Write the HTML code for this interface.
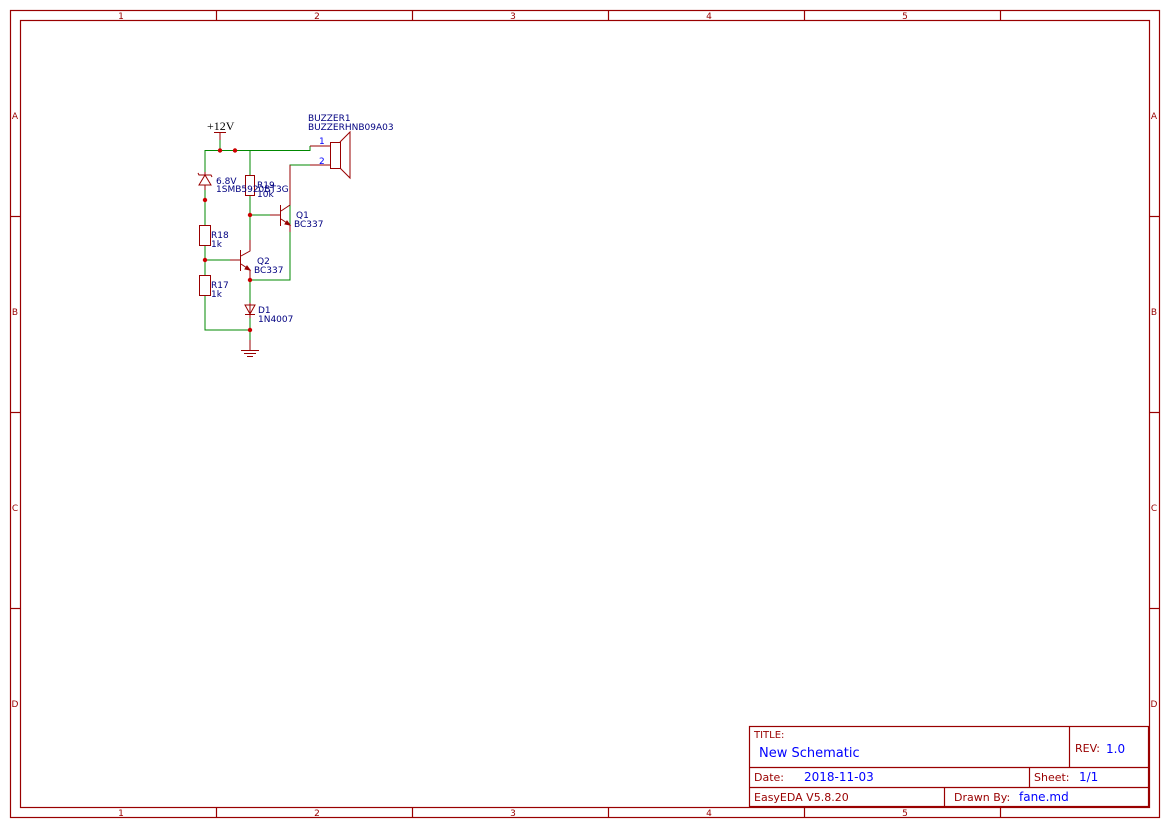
<!DOCTYPE html>
<html><head><meta charset="utf-8"><style>
html,body{margin:0;padding:0;background:#fff;}
svg{display:block;}
.fr{fill:none;stroke:#990000;stroke-width:1.2;}
.t{font-family:"DejaVu Sans","Liberation Sans",sans-serif;font-size:9px;fill:#990000;}
.b{font-family:"DejaVu Sans","Liberation Sans",sans-serif;font-size:9px;fill:#000080;}
.w{stroke:#008800;stroke-width:1;fill:none;}
.p{stroke:#990000;stroke-width:1;fill:none;}
.d{fill:#cc0000;}
</style></head><body>
<svg width="1169" height="827" viewBox="0 0 1169 827">
<rect x="10.5" y="10.5" width="1149" height="807" class="fr"/>
<rect x="20.5" y="20.5" width="1129" height="787" class="fr"/>
<g class="fr">
<line x1="216.5" y1="10" x2="216.5" y2="20"/><line x1="412.5" y1="10" x2="412.5" y2="20"/><line x1="608.5" y1="10" x2="608.5" y2="20"/><line x1="804.5" y1="10" x2="804.5" y2="20"/><line x1="1000.5" y1="10" x2="1000.5" y2="20"/>
<line x1="216.5" y1="807" x2="216.5" y2="817"/><line x1="412.5" y1="807" x2="412.5" y2="817"/><line x1="608.5" y1="807" x2="608.5" y2="817"/><line x1="804.5" y1="807" x2="804.5" y2="817"/><line x1="1000.5" y1="807" x2="1000.5" y2="817"/>
<line x1="10" y1="216.5" x2="20" y2="216.5"/><line x1="10" y1="412.5" x2="20" y2="412.5"/><line x1="10" y1="608.5" x2="20" y2="608.5"/>
<line x1="1149" y1="216.5" x2="1159" y2="216.5"/><line x1="1149" y1="412.5" x2="1159" y2="412.5"/><line x1="1149" y1="608.5" x2="1159" y2="608.5"/>
</g>
<g class="t" text-anchor="middle">
<text x="121" y="19">1</text><text x="317" y="19">2</text><text x="513" y="19">3</text><text x="709" y="19">4</text><text x="905" y="19">5</text>
<text x="121" y="816">1</text><text x="317" y="816">2</text><text x="513" y="816">3</text><text x="709" y="816">4</text><text x="905" y="816">5</text>
<text x="15" y="119">A</text><text x="15" y="315">B</text><text x="15" y="511">C</text><text x="15" y="707">D</text>
<text x="1154" y="119">A</text><text x="1154" y="315">B</text><text x="1154" y="511">C</text><text x="1154" y="707">D</text>
</g>
<!-- title block -->
<g class="fr">
<rect x="749.5" y="726.5" width="399" height="80"/>
<line x1="749" y1="767.5" x2="1149" y2="767.5"/><line x1="749" y1="787.5" x2="1149" y2="787.5"/>
<line x1="1069.5" y1="726" x2="1069.5" y2="767"/><line x1="1029.5" y1="767" x2="1029.5" y2="787"/><line x1="944.5" y1="787" x2="944.5" y2="807"/>
</g>
<text class="t" x="754" y="738" style="font-size:10px">TITLE:</text>
<text x="759" y="757" style="font-family:'DejaVu Sans',sans-serif;font-size:13px;fill:#0000ff">New Schematic</text>
<text class="t" x="1075" y="752" style="font-size:11px">REV:</text>
<text x="1106" y="753" style="font-family:'DejaVu Sans',sans-serif;font-size:12px;fill:#0000ff">1.0</text>
<text class="t" x="754" y="781" style="font-size:11px">Date:</text>
<text x="804" y="781" style="font-family:'DejaVu Sans',sans-serif;font-size:12px;fill:#0000ff">2018-11-03</text>
<text class="t" x="1034" y="781" style="font-size:11px">Sheet:</text>
<text x="1079" y="781" style="font-family:'DejaVu Sans',sans-serif;font-size:12px;fill:#0000ff">1/1</text>
<text class="t" x="754" y="801" style="font-size:11px">EasyEDA V5.8.20</text>
<text class="t" x="954" y="801" style="font-size:11px">Drawn By:</text>
<text x="1019" y="801" style="font-family:'DejaVu Sans',sans-serif;font-size:12px;fill:#0000ff">fane.md</text>
<!-- schematic wires -->
<g class="w">
<polyline points="205,150.5 310,150.5 310,146"/>
<line x1="220" y1="140" x2="220" y2="150"/>
<polyline points="310,165 290,165 290,280 250,280"/>
<line x1="205" y1="150" x2="205" y2="172"/>
<line x1="205" y1="190" x2="205" y2="225"/>
<line x1="205" y1="245" x2="205" y2="275"/>
<polyline points="205,295 205,330 250,330"/>
<line x1="250" y1="150" x2="250" y2="175"/>
<line x1="250" y1="195" x2="250" y2="240"/>
<line x1="205" y1="260" x2="230" y2="260"/>
<line x1="250" y1="215" x2="270" y2="215"/>
<line x1="250" y1="280" x2="250" y2="303"/>
<line x1="250" y1="318" x2="250" y2="340"/>
</g>
<g class="p">
<line x1="220" y1="132" x2="220" y2="140"/><line x1="214" y1="132.5" x2="226" y2="132.5"/>
<line x1="310" y1="146" x2="330" y2="146"/><line x1="310" y1="165" x2="330" y2="165"/>
<rect x="330.5" y="142.5" width="10" height="26"/>
<polyline points="340,142 350,132 350,178 340,168"/>
<!-- zener -->
<polygon points="199,185 211,185 205,175"/><polyline points="198,173 199,175 211,175 212,177"/>
<line x1="205" y1="172" x2="205" y2="175"/><line x1="205" y1="185" x2="205" y2="190"/>
<rect x="199.5" y="225.5" width="11" height="20"/>
<rect x="199.5" y="275.5" width="11" height="20"/>
<rect x="245.5" y="175.5" width="9" height="20"/>
<!-- Q2 -->
<line x1="230" y1="260" x2="240" y2="260"/><line x1="240.5" y1="250" x2="240.5" y2="271"/>
<polyline points="250,240 250,251 241,256"/><polyline points="241,264 250,270 250,280"/>
<polygon points="250,270 245,269 247,266" fill="#990000"/>
<!-- Q1 -->
<line x1="270" y1="215" x2="280" y2="215"/><line x1="280.5" y1="205" x2="280.5" y2="226"/>
<polyline points="290,165 290,205 281,211"/><polyline points="281,219 290,225 290,232"/>
<polygon points="290,225 285,224 287,221" fill="#990000"/>
<!-- diode -->
<line x1="250" y1="303" x2="250" y2="318"/>
<polygon points="245,305 255,305 250,314"/><line x1="245" y1="314.5" x2="255" y2="314.5"/>
<!-- ground -->
<line x1="250" y1="340" x2="250" y2="350"/>
<line x1="241" y1="350.5" x2="259" y2="350.5"/><line x1="244" y1="353.5" x2="256" y2="353.5"/><line x1="247" y1="356.5" x2="253" y2="356.5"/>
</g>
<g>
<circle class="d" cx="220" cy="150.5" r="2.2"/><circle class="d" cx="235" cy="150.5" r="2.2"/>
<circle class="d" cx="205" cy="200" r="2.2"/><circle class="d" cx="205" cy="260" r="2.2"/>
<circle class="d" cx="250" cy="215" r="2.2"/><circle class="d" cx="250" cy="280" r="2.2"/><circle class="d" cx="250" cy="330" r="2.2"/>
</g>
<text x="207" y="130" style="font-family:'Liberation Serif',serif;font-size:12px;fill:#000">+12V</text>
<g class="b">
<text x="308" y="121">BUZZER1</text><text x="308" y="130">BUZZERHNB09A03</text>
<text x="319" y="144" style="fill:#0000ff">1</text><text x="319" y="164" style="fill:#0000ff">2</text>
<text x="216" y="184">6.8V</text><text x="216" y="192">1SMB5920BT3G</text>
<text x="257" y="188">R19</text><text x="257" y="197">10k</text>
<text x="296" y="218">Q1</text><text x="294" y="227">BC337</text>
<text x="211" y="238">R18</text><text x="211" y="247">1k</text>
<text x="257" y="264">Q2</text><text x="254" y="273">BC337</text>
<text x="211" y="288">R17</text><text x="211" y="297">1k</text>
<text x="258" y="313">D1</text><text x="258" y="322">1N4007</text>
</g>
</svg>
</body></html>
